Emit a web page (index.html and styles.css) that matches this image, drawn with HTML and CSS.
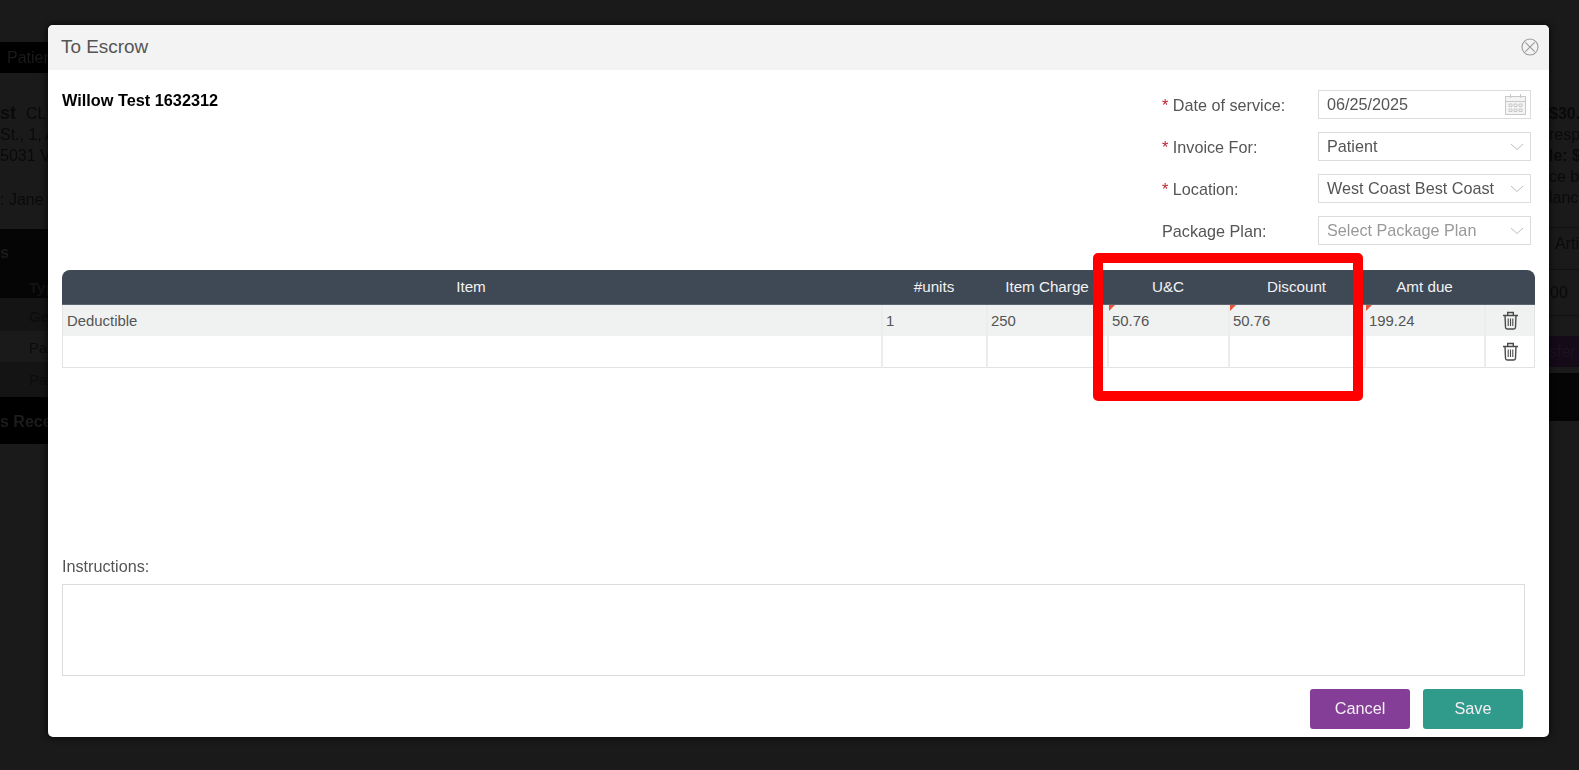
FILE: index.html
```html
<!DOCTYPE html>
<html lang="en">
<head>
<meta charset="utf-8">
<title>To Escrow</title>
<link rel="stylesheet" href="styles.css">
</head>
<body>
<div class="page">
  <div class="bg-left">
    <div class="bg-tab">Patien</div>
    <div class="bg-info">
      <div class="bg-name">st <span class="bg-small">CL</span></div>
      <div>St., 1, A</div>
      <div>5031 V</div>
      <div class="bg-jane">: Jane</div>
    </div>
    <div class="bg-section">
      <div class="bg-sec-title">s</div>
      <div class="bg-type">Typ</div>
    </div>
    <div class="bg-row">Ge</div>
    <div class="bg-row bg-alt">Pa</div>
    <div class="bg-row bg-tall">Pa</div>
    <div class="bg-rece">s Rece</div>
  </div>
  <div class="bg-right">
    <div class="bg-summary">
      <div><b>$30.</b></div>
      <div>resp</div>
      <div><b>le: $</b></div>
      <div>ce ba</div>
      <div>lanc</div>
    </div>
    <div class="bg-arti">Arti</div>
    <div class="bg-00">00</div>
    <div class="bg-sfer">sfer</div>
    <div class="bg-black"></div>
  </div>
</div>
<div class="modal">
  <header class="modal-head">
    <h1 class="modal-title">To Escrow</h1>
    <svg class="close-icon" width="18" height="18" viewBox="0 0 18 18"><circle cx="9" cy="9" r="8" fill="none" stroke="#9a9a9a" stroke-width="1.1"/><path d="M4.3 4.3l9.4 9.4M13.7 4.3l-9.4 9.4" stroke="#9a9a9a" stroke-width="1.1" fill="none"/></svg>
  </header>
  <div class="modal-body">
    <div class="top">
      <div class="patient">Willow Test 1632312</div>
      <div class="form">
        <div class="field">
          <label class="label"><span class="req">*</span> Date of service:</label>
          <div class="input">06/25/2025
            <svg class="cal" width="23" height="23" viewBox="0 0 23 23" fill="#f4f4f4" stroke="#c8c8c8"><rect x="1.5" y="3.5" width="20" height="18"/><path d="M1.5 8.5h20M6.5 1v4M16.5 1v4" fill="none"/><path d="M5 11h3v2.5H5zM10 11h3v2.5h-3zM15 11h3v2.5h-3zM5 16h3v2.5H5zM10 16h3v2.5h-3zM15 16h3v2.5h-3z"/></svg>
          </div>
        </div>
        <div class="field">
          <label class="label"><span class="req">*</span> Invoice For:</label>
          <div class="input">Patient<svg class="chev" width="14" height="8" viewBox="0 0 14 8"><path d="M1 1l6 5.5L13 1" fill="none" stroke="#bdbdbd"/></svg></div>
        </div>
        <div class="field">
          <label class="label"><span class="req">*</span> Location:</label>
          <div class="input">West Coast Best Coast<svg class="chev" width="14" height="8" viewBox="0 0 14 8"><path d="M1 1l6 5.5L13 1" fill="none" stroke="#bdbdbd"/></svg></div>
        </div>
        <div class="field">
          <label class="label">Package Plan:</label>
          <div class="input placeholder">Select Package Plan<svg class="chev" width="14" height="8" viewBox="0 0 14 8"><path d="M1 1l6 5.5L13 1" fill="none" stroke="#bdbdbd"/></svg></div>
        </div>
      </div>
    </div>
    <div class="grid-wrap">
      <table class="grid">
        <colgroup>
          <col class="c-item"><col class="c-units"><col class="c-charge"><col class="c-uc"><col class="c-disc"><col class="c-amt"><col class="c-del">
        </colgroup>
        <thead>
          <tr><th>Item</th><th>#units</th><th>Item Charge</th><th>U&amp;C</th><th>Discount</th><th>Amt due</th><th></th></tr>
        </thead>
        <tbody>
          <tr class="shaded">
            <td>Deductible</td><td>1</td><td>250</td>
            <td class="flag">50.76</td><td class="flag">50.76</td><td class="flag">199.24</td>
            <td class="del"><svg width="17" height="19" viewBox="0 0 17 19" fill="none" stroke="#4a4a4a" stroke-width="1.4"><path d="M1 4.5h15M5.7 4.5V1.5h5.6v3M3 4.5l.5 11.8c0 1 .7 1.7 1.7 1.7h6.6c1 0 1.7-.7 1.7-1.7L14 4.5"/><path d="M6.2 7.5v7.5M8.5 7.5v7.5M10.8 7.5v7.5" stroke-width="1.1"/></svg></td>
          </tr>
          <tr>
            <td></td><td></td><td></td><td></td><td></td><td></td>
            <td class="del"><svg width="17" height="19" viewBox="0 0 17 19" fill="none" stroke="#4a4a4a" stroke-width="1.4"><path d="M1 4.5h15M5.7 4.5V1.5h5.6v3M3 4.5l.5 11.8c0 1 .7 1.7 1.7 1.7h6.6c1 0 1.7-.7 1.7-1.7L14 4.5"/><path d="M6.2 7.5v7.5M8.5 7.5v7.5M10.8 7.5v7.5" stroke-width="1.1"/></svg></td>
          </tr>
        </tbody>
      </table>
      <div class="highlight"></div>
    </div>
    <div class="instr-label">Instructions:</div>
    <div class="instr-box"></div>
    <div class="actions">
      <button class="btn btn-cancel">Cancel</button>
      <button class="btn btn-save">Save</button>
    </div>
  </div>
</div>
</body>
</html>
```
FILE: styles.css
```css
* { box-sizing: border-box; }
html, body { margin: 0; height: 100%; overflow: hidden; }
body {
  background: #1a1a1a;
  font-family: "Liberation Sans", Arial, sans-serif;
  font-size: 14px;
  color: #000;
  position: relative;
  width: 1579px;
  height: 770px;
}
.page {
  display: flex;
  justify-content: space-between;
  height: 770px;
  color: #0a0a0a;
  font-size: 16px;
  white-space: nowrap;
  filter: blur(.6px);
}
.bg-left { width: 60px; overflow: hidden; padding-top: 42px; }
.bg-tab { height: 31px; background: #000; padding: 7px 0 0 7px; color: #1a1a1a; }
.bg-info { height: 156px; padding-top: 30px; line-height: 21px; }
.bg-name { font-size: 18px; font-weight: 700; }
.bg-small { font-size: 16px; font-weight: 400; margin-left: 5px; }
.bg-jane { margin-top: 23px; }
.bg-section { height: 69px; background: #050505; position: relative; font-weight: 700; color: #1a1a1a; }
.bg-sec-title { padding-top: 15px; height: 50px; }
.bg-type { padding-left: 29px; font-size: 15px; color: #121212; }
.bg-row { height: 33px; padding: 10px 0 0 29px; font-size: 15px; line-height: 18px; background: #141414; color: #0c0c0c; }
.bg-alt { height: 31px; padding-top: 8px; background: #1a1a1a; }
.bg-tall { height: 35px; padding-top: 9px; }
.bg-rece { height: 47px; background: #000; color: #1c1c1c; font-weight: 700; padding-top: 16px; }
.bg-right { width: 31px; overflow: hidden; font-size: 16px; line-height: 21px; padding-top: 103px; }
.bg-summary { height: 125px; border-bottom: 1px solid #111; padding-left: 1px; }
.bg-arti { height: 42px; border-bottom: 1px solid #111; padding: 5px 0 0 7px; }
.bg-00 { height: 46px; border-bottom: 1px solid #111; padding: 12px 0 0 2px; }
.bg-sfer { height: 31px; margin-top: 20px; background: #150a18; color: #1c1220; padding: 5px 0 0 1px; }
.bg-black { height: 48px; margin-top: 6px; background: #050505; }
.modal {
  position: absolute;
  left: 48px;
  top: 25px;
  width: 1501px;
  height: 712px;
  background: #fff;
  border-radius: 5px;
  box-shadow: 0 0 7px rgba(0,0,0,.85);
  display: flex;
  flex-direction: column;
  overflow: hidden;
}
.modal-head {
  height: 45px;
  flex: none;
  background: #f3f3f3;
  display: flex;
  align-items: center;
  justify-content: space-between;
  padding: 0 10px 2px 13px;
}
.modal-title { margin: 0; font-size: 18.9px; font-weight: 400; color: #555; }
.modal-body { flex: 1; padding: 0 14px; display: flex; flex-direction: column; }
.top { display: flex; justify-content: space-between; height: 200px; padding-top: 20px; }
.patient { font-weight: 700; font-size: 16.3px; color: #000; line-height: 20px; }
.form { width: 369px; margin-right: 4px; display: flex; flex-direction: column; gap: 13px; }
.field { display: flex; align-items: center; height: 29px; }
.label { width: 156px; font-size: 16.2px; color: #555; padding-top: 2px; white-space: nowrap; }
.req { color: #c0202f; }
.input {
  width: 213px;
  height: 29px;
  border: 1px solid #dcdcdc;
  font-size: 16.2px;
  color: #555;
  padding: 0 0 0 8px;
  display: flex;
  align-items: center;
  justify-content: space-between;
  white-space: nowrap;
}
.placeholder { color: #999; }
.cal { margin-right: 3px; }
.chev { margin-right: 6px; margin-top: 1px; flex: none; }
.grid-wrap { position: relative; width: 1473px; }
.grid { width: 1473px; table-layout: fixed; border-collapse: separate; border-spacing: 0; font-size: 14.9px; color: #555; }
.c-item { width: 821px; }
.c-units { width: 105px; }
.c-charge { width: 121px; }
.c-uc { width: 121px; }
.c-disc { width: 136px; }
.c-amt { width: 120px; }
.c-del { width: 49px; }
.grid th { height: 35px; background: #3f4855; color: #f2f2f2; font-weight: 400; font-size: 15.2px; padding: 0 3px 2px 0; border-bottom: 1px solid #5b6470; }
.grid th:first-child { border-top-left-radius: 8px; }
.grid th:last-child { border-top-right-radius: 8px; }
.grid td { height: 31px; padding: 0 3px; border-right: 2px solid #ececec; position: relative; }
.grid tbody tr:last-child td { height: 32px; border-bottom: 1px solid #e2e2e2; }
.grid td:first-child { border-left: 1px solid #e4e4e4; padding-left: 4px; }
.grid td:last-child { border-right: 1px solid #e4e4e4; }
.shaded td { background: #f0f2f1; }
.flag::before { content: ""; position: absolute; left: 0; top: 0; border-top: 6px solid #e2563c; border-right: 6px solid transparent; }
.del { text-align: center; }
.del svg { vertical-align: middle; }
.highlight { position: absolute; left: 1031px; top: -17px; width: 270px; height: 148px; border: 10px solid #ff0000; border-radius: 5px; }
.instr-label { margin-top: 189px; font-size: 16.2px; color: #555; line-height: 18px; }
.instr-box { margin-top: 9px; width: 1463px; height: 92px; border: 1px solid #dcdcdc; }
.actions { display: flex; justify-content: flex-end; gap: 13px; margin-top: 13px; padding-right: 12px; }
.btn { width: 100px; height: 40px; border: 1px solid transparent; border-radius: 3px; color: #f3eef3; font-family: inherit; font-size: 16.3px; padding: 0 0 2px; }
.btn-cancel { background: #843e97; }
.btn-save { background: #309b8b; }
```
